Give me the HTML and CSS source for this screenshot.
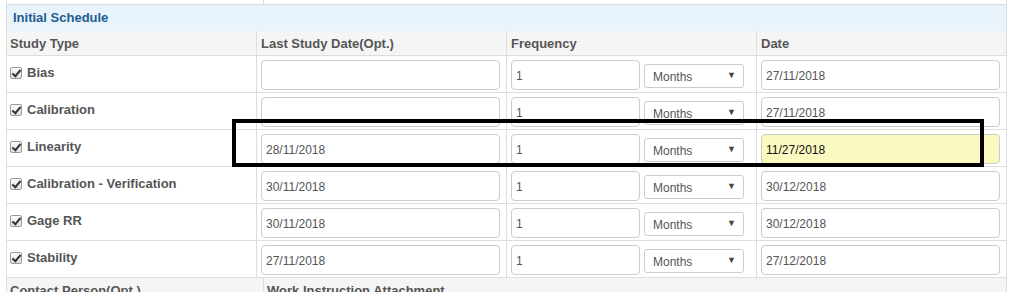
FILE: index.html
```html
<!DOCTYPE html>
<html lang="en">

<head>
    <meta charset="UTF-8">
    <title>Initial Schedule</title>
    <link rel="stylesheet" href="styles.css">
</head>

<body>

    <div class="panel">
        <div class="split-row top-row">
            <div class="split-cell"></div>
            <div class="split-cell"></div>
        </div>

        <div class="section-title">Initial Schedule</div>

        <div class="grid-row head-row">
            <div class="cell first">Study Type</div>
            <div class="cell">Last Study Date(Opt.)</div>
            <div class="cell">Frequency</div>
            <div class="cell">Date</div>
        </div>

        <div class="grid-row">
            <div class="cell first">
                <label class="study"><input type="checkbox" checked> Bias</label>
            </div>
            <div class="cell"><input class="text-input wide" type="text" value=""></div>
            <div class="cell freq">
                <input class="text-input num" type="text" value="1">
                <span class="select-wrap"><select><option>Months</option></select></span>
            </div>
            <div class="cell"><input class="text-input wide" type="text" value="27/11/2018"></div>
        </div>

        <div class="grid-row">
            <div class="cell first">
                <label class="study"><input type="checkbox" checked> Calibration</label>
            </div>
            <div class="cell"><input class="text-input wide" type="text" value=""></div>
            <div class="cell freq">
                <input class="text-input num" type="text" value="1">
                <span class="select-wrap"><select><option>Months</option></select></span>
            </div>
            <div class="cell"><input class="text-input wide" type="text" value="27/11/2018"></div>
        </div>

        <div class="grid-row">
            <div class="cell first">
                <label class="study"><input type="checkbox" checked> Linearity</label>
            </div>
            <div class="cell"><input class="text-input wide" type="text" value="28/11/2018"></div>
            <div class="cell freq">
                <input class="text-input num" type="text" value="1">
                <span class="select-wrap"><select><option>Months</option></select></span>
            </div>
            <div class="cell"><input class="text-input wide highlight" type="text" value="11/27/2018"></div>
        </div>

        <div class="grid-row">
            <div class="cell first">
                <label class="study"><input type="checkbox" checked> Calibration - Verification</label>
            </div>
            <div class="cell"><input class="text-input wide" type="text" value="30/11/2018"></div>
            <div class="cell freq">
                <input class="text-input num" type="text" value="1">
                <span class="select-wrap"><select><option>Months</option></select></span>
            </div>
            <div class="cell"><input class="text-input wide" type="text" value="30/12/2018"></div>
        </div>

        <div class="grid-row">
            <div class="cell first">
                <label class="study"><input type="checkbox" checked> Gage RR</label>
            </div>
            <div class="cell"><input class="text-input wide" type="text" value="30/11/2018"></div>
            <div class="cell freq">
                <input class="text-input num" type="text" value="1">
                <span class="select-wrap"><select><option>Months</option></select></span>
            </div>
            <div class="cell"><input class="text-input wide" type="text" value="30/12/2018"></div>
        </div>

        <div class="grid-row">
            <div class="cell first">
                <label class="study"><input type="checkbox" checked> Stability</label>
            </div>
            <div class="cell"><input class="text-input wide" type="text" value="27/11/2018"></div>
            <div class="cell freq">
                <input class="text-input num" type="text" value="1">
                <span class="select-wrap"><select><option>Months</option></select></span>
            </div>
            <div class="cell"><input class="text-input wide" type="text" value="27/12/2018"></div>
        </div>

        <div class="split-row foot-row">
            <div class="split-cell">Contact Person(Opt.)</div>
            <div class="split-cell">Work Instruction Attachment</div>
        </div>
    </div>

    <!-- highlight box drawn over the Linearity row -->
    <div class="mark-box"></div>

</body>

</html>
```

FILE: styles.css
```css
body {
    margin: 0;
    font-family: 'Liberation Sans', Arial, sans-serif;
    font-size: 12px;
    color: #555;
    background: #fff;
}

.panel {
    margin-left: 6px;
    width: 1001px;
    box-sizing: border-box;
    border-left: 1px solid #ddd;
    border-right: 1px solid #ddd;
    height: 292px;
    overflow: hidden;
}

.split-row {
    display: grid;
    grid-template-columns: 256px 1fr;
}

.split-cell+.split-cell {
    border-left: 1px solid #ddd;
}

.top-row {
    height: 4px;
    border-bottom: 1px solid #ddd;
}

.foot-row {
    background-color: #f5f5f5;
    font-weight: bold;
    font-size: 13px;
    height: 30px;
}

.foot-row .split-cell {
    padding: 5px 3px 0;
}

.foot-row .split-cell+.split-cell {
    padding-left: 3px;
}

.section-title {
    height: 26px;
    line-height: 25px;
    padding-left: 6px;
    background-color: #e8f3fc;
    color: #245d8f;
    font-weight: bold;
    font-size: 13px;
}

.grid-row {
    display: grid;
    grid-template-columns: 249px 250px 250px 1fr;
    height: 36px;
    border-bottom: 1px solid #ddd;
}

.cell {
    display: flex;
    align-items: center;
    padding-left: 4px;
}

.cell+.cell {
    border-left: 1px solid #ddd;
}

.cell.first {
    padding-left: 3px;
}

.head-row {
    height: 24px;
    background-color: #f5f5f5;
    font-weight: bold;
    font-size: 13px;
}

.head-row .cell {
    align-items: flex-start;
    padding-top: 5px;
}

.study {
    display: flex;
    align-items: center;
    font-weight: bold;
    font-size: 13px;
    margin-top: -3px;
}

.study input {
    appearance: none;
    position: relative;
    width: 12px;
    height: 12px;
    margin: 0 5px 0 0;
    border: 1px solid #9a9a9a;
    border-radius: 2px;
    background: linear-gradient(#fdfdfd, #e0e0e0);
}

.study input:checked::after {
    content: "";
    position: absolute;
    left: 3px;
    top: 0px;
    width: 3px;
    height: 7px;
    border-right: 2px solid #333;
    border-bottom: 2px solid #333;
    transform: rotate(40deg);
}

.text-input {
    box-sizing: border-box;
    height: 30px;
    margin-top: 1px;
    padding: 2px 4px 0;
    border: 1px solid #ccc;
    border-radius: 4px;
    font-family: inherit;
    font-size: 12px;
    color: #555;
    background: #fff;
}

.text-input.wide {
    width: 239px;
}

.text-input.num {
    width: 129px;
}

.text-input.highlight {
    background-color: #fafac0;
    color: #111;
}

.freq {
    gap: 4px;
}

.select-wrap {
    position: relative;
    display: inline-block;
    margin-top: 3px;
}

.select-wrap select {
    appearance: none;
    box-sizing: border-box;
    width: 100px;
    height: 24px;
    padding: 3px 0 0 8px;
    border: 1px solid #ccc;
    border-radius: 3px;
    background: #fff;
    font-family: inherit;
    font-size: 12px;
    color: #555;
}

.select-wrap::after {
    content: "\25BC";
    position: absolute;
    right: 8px;
    top: 6px;
    font-size: 9px;
    color: #444;
    pointer-events: none;
}

.mark-box {
    position: absolute;
    left: 232px;
    top: 119px;
    width: 752px;
    height: 48px;
    box-sizing: border-box;
    border: 4px solid #000;
}
```
